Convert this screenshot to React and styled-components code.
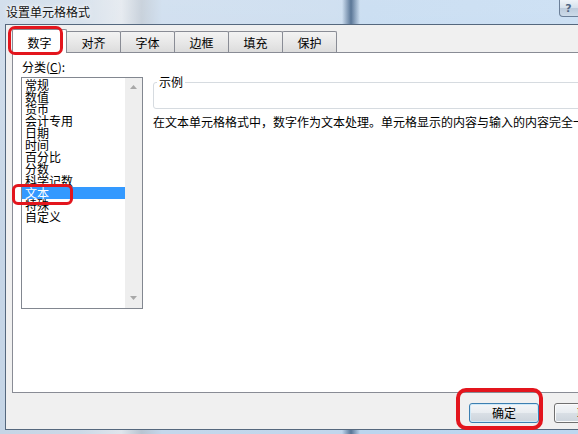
import React from "react";
import styled, { createGlobalStyle } from "styled-components";

const Global = createGlobalStyle`
  html, body { margin: 0; padding: 0; overflow: hidden; background: #bcd5ee; }
  body {
    font-family: "Noto Sans CJK SC", "Microsoft YaHei", sans-serif;
    font-size: 12px;
    color: #000;
  }
  * { box-sizing: border-box; }
`;

const Window = styled.div`
  position: relative;
  width: 578px;
  height: 434px;
  overflow: hidden;
  display: flex;
  flex-direction: column;
  background:
    linear-gradient(90deg, rgba(70,100,135,0) 342px, rgba(70,100,135,0.85) 351px, rgba(70,100,135,0) 360px),
    linear-gradient(180deg, rgba(255,255,255,0.25), rgba(255,255,255,0) 60%),
    linear-gradient(90deg, #c5d5e6 0%, #ccd9e7 14%, #dfe5ec 21%, #b8c4d1 24.5%, #c4d7eb 28%, #c1d6ec 58%, #bcd5ee 63%, #bed7f0 100%);
`;

const TitleBar = styled.div`
  flex: none;
  height: 24px;
  display: flex;
  align-items: center;
  justify-content: space-between;
  padding-left: 6px;
`;

const Title = styled.span`
  font-size: 12px;
  line-height: 14px;
  color: #111;
  text-shadow: 0 0 6px #fff, 0 0 3px #fff;
`;

const HelpButton = styled.div`
  align-self: flex-start;
  width: 27px;
  height: 17px;
  margin-right: -8px;
  padding-right: 8px;
  border: 1px solid #6b7f98;
  border-top: none;
  border-radius: 0 0 4px 4px;
  background: linear-gradient(#eef3f8, #d5e0eb 50%, #bccbdc 52%, #cddbe9);
  display: flex;
  align-items: center;
  justify-content: center;
  font: bold 11px "DejaVu Sans", sans-serif;
  color: #4f6684;
`;

const Frame = styled.div`
  flex: 1;
  min-height: 0;
  display: flex;
  padding: 0 0 4px 5px;
`;

const Client = styled.div`
  flex: 1;
  min-width: 0;
  display: flex;
  flex-direction: column;
  background: #f0f0f0;
  border: 1px solid #55687e;
  border-right: none;
`;

const TabStrip = styled.div`
  flex: none;
  height: 27px;
  display: flex;
  align-items: flex-end;
  padding-left: 6px;
`;

const Tab = styled.div`
  position: relative;
  z-index: ${(p) => (p.$active ? 2 : 1)};
  width: 55px;
  height: ${(p) => (p.$active ? "24px" : "21px")};
  margin-left: ${(p) => (p.$first ? "0" : "-1px")};
  margin-bottom: ${(p) => (p.$active ? "-1px" : "0")};
  padding-top: ${(p) => (p.$active ? "6px" : "4px")};
  border: 1px solid #898c95;
  border-bottom: none;
  border-radius: 2px 2px 0 0;
  background: ${(p) => (p.$active ? "#fff" : "linear-gradient(#f3f3f3, #e6e6e6 60%, #dcdcdc)")};
  text-align: center;
  font-size: 12px;
  line-height: 14px;
`;

const Panel = styled.div`
  flex: none;
  width: 640px;
  height: 341px;
  margin-left: 6px;
  padding: 7px 0 0 8px;
  background: #fff;
  border: 1px solid #898c95;
  display: grid;
  grid-template-columns: 122px 1fr;
  column-gap: 10px;
  align-content: start;
`;

const LeftCol = styled.div`
  display: flex;
  flex-direction: column;
`;

const FieldLabel = styled.div`
  font-size: 12px;
  line-height: 14px;
  padding-left: 1px;
`;

const ListBox = styled.div`
  margin-top: 3px;
  height: 232px;
  border: 1px solid #828790;
  background: #fff;
  display: flex;
`;

const Items = styled.div`
  flex: 1;
  padding-top: 1px;
`;

const Item = styled.div`
  position: relative;
  height: 12px;
  line-height: 12px;
  font-size: 12px;
  padding-left: 3px;
  white-space: nowrap;
  background: ${(p) => (p.$selected ? "#3399ff" : "transparent")};
  color: ${(p) => (p.$selected ? "#fff" : "#000")};
`;

const ScrollBar = styled.div`
  width: 17px;
  background: #eeeeee;
  display: flex;
  flex-direction: column;
  justify-content: space-between;
  align-items: center;
  padding: 7px 0 8px;
`;

const RightCol = styled.div`
  display: flex;
  flex-direction: column;
  min-width: 0;
`;

const GroupBox = styled.div`
  position: relative;
  margin-top: 22px;
  height: 27px;
  border: 1px solid #d6dbe0;
  border-radius: 3px;
`;

const GroupLabel = styled.span`
  position: absolute;
  top: -8px;
  left: 3px;
  padding: 0 2px;
  background: #fff;
  font-size: 12px;
  line-height: 14px;
`;

const Description = styled.div`
  margin-top: 6px;
  font-size: 12px;
  line-height: 14px;
  white-space: nowrap;
`;

const Footer = styled.div`
  flex: none;
  height: 36px;
  display: flex;
  align-items: flex-start;
  gap: 15px;
  padding: 10px 0 0 463px;
`;

const Button = styled.button`
  position: relative;
  flex: none;
  width: 70px;
  height: 20px;
  padding: 0;
  border: 1px solid ${(p) => (p.$default ? "#3c7fb1" : "#707070")};
  border-radius: 3px;
  background: linear-gradient(#f4f6f8, #e8ecf0 50%, #d9dfe5 52%, #ccd4dc);
  box-shadow: ${(p) => (p.$default ? "inset 0 0 0 1px #cfe9f8" : "inset 0 0 0 1px #fbfbfb")};
  font-family: "Noto Sans CJK SC", "Microsoft YaHei", sans-serif;
  font-size: 12px;
  line-height: 16px;
  color: #000;
`;

const Highlight = styled.span`
  position: absolute;
  z-index: 10;
  pointer-events: none;
  left: ${(p) => p.$l}px;
  top: ${(p) => p.$t}px;
  width: ${(p) => p.$w}px;
  height: ${(p) => p.$h}px;
  border: ${(p) => p.$bw}px solid #e3151d;
  border-radius: ${(p) => p.$r}px;
`;

const tabs = ["数字", "对齐", "字体", "边框", "填充", "保护"];
const categories = ["常规", "数值", "货币", "会计专用", "日期", "时间", "百分比", "分数", "科学记数", "文本", "特殊", "自定义"];

function Arrow({ up }) {
  return (
    <svg width="7" height="4" viewBox="0 0 7 4">
      <polygon points={up ? "0,4 7,4 3.5,0" : "0,0 7,0 3.5,4"} fill="#a8a8a8" />
    </svg>
  );
}

export default function App() {
  return (
    <>
      <Global />
      <Window>
        <TitleBar>
          <Title>设置单元格格式</Title>
          <HelpButton>?</HelpButton>
        </TitleBar>
        <Frame>
          <Client>
            <TabStrip>
              {tabs.map((t, i) => (
                <Tab key={t} $active={i === 0} $first={i === 0}>
                  {t}
                  {i === 0 && <Highlight $l={-5} $t={-4} $w={55} $h={29} $bw={3.5} $r={7} />}
                </Tab>
              ))}
            </TabStrip>
            <Panel>
              <LeftCol>
                <FieldLabel>
                  分类(<u>C</u>):
                </FieldLabel>
                <ListBox>
                  <Items>
                    {categories.map((c) => (
                      <Item key={c} $selected={c === "文本"}>
                        {c}
                        {c === "文本" && <Highlight $l={-10} $t={-3} $w={61} $h={21} $bw={3} $r={6} />}
                      </Item>
                    ))}
                  </Items>
                  <ScrollBar>
                    <Arrow up />
                    <Arrow />
                  </ScrollBar>
                </ListBox>
              </LeftCol>
              <RightCol>
                <GroupBox>
                  <GroupLabel>示例</GroupLabel>
                </GroupBox>
                <Description>
                  在文本单元格格式中，数字作为文本处理。单元格显示的内容与输入的内容完全一致。
                </Description>
              </RightCol>
            </Panel>
            <Footer>
              <Button $default>
                确定
                <Highlight $l={-14} $t={-16} $w={87} $h={42} $bw={4} $r={10} />
              </Button>
              <Button>取消</Button>
            </Footer>
          </Client>
        </Frame>
      </Window>
    </>
  );
}
